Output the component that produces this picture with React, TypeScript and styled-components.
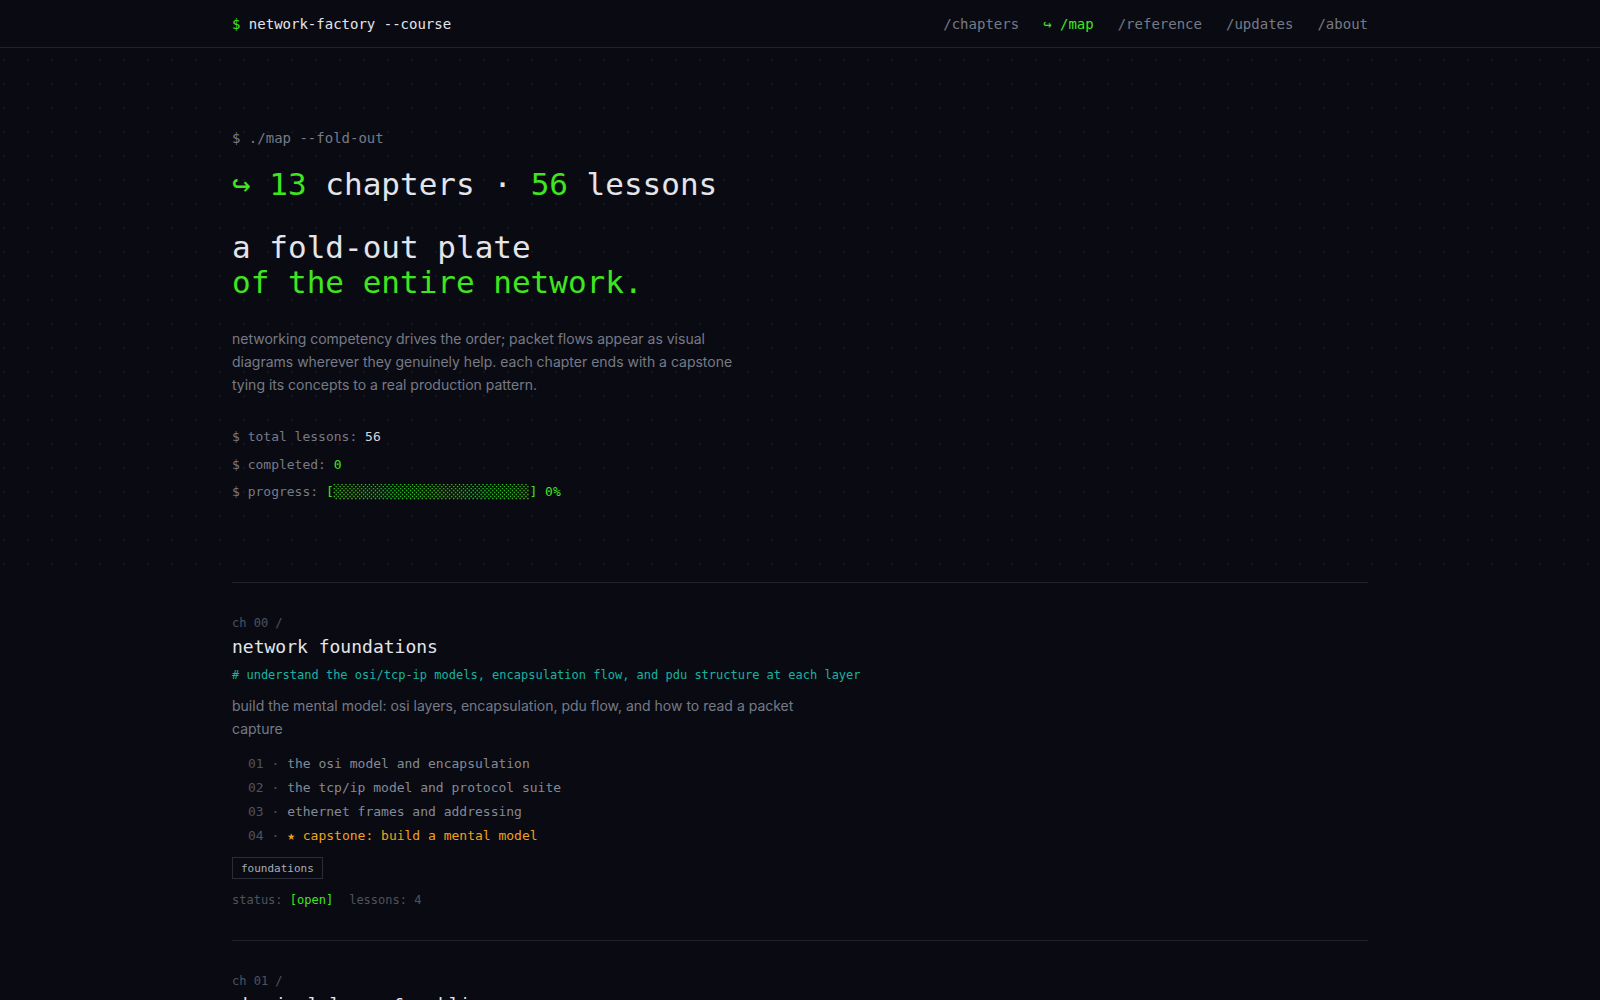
import React from "react";
import styled, { createGlobalStyle } from "styled-components";

const mono = `"DejaVu Sans Mono", "Liberation Mono", monospace`;
const sans = `Inter, "Noto Sans", "Liberation Sans", sans-serif`;

const green = "#3fe61f";
const teal = "#17b3a0";
const amber = "#eea21a";
const text = "#e4e5ea";
const muted = "#767a87";
const dim = "#4e5260";
const rule = "#20222c";

const Global = createGlobalStyle`
  html, body {
    margin: 0;
    padding: 0;
    background: #0a0b12;
    color: ${text};
    font-family: ${mono};
  }
  * { box-sizing: border-box; }
`;

const Container = styled.div`
  max-width: 1200px;
  margin: 0 auto;
  padding: 0 32px;
`;

const Header = styled.header`
  height: 48px;
  border-bottom: 1px solid ${rule};
`;

const HeaderRow = styled(Container)`
  height: 47px;
  display: flex;
  align-items: center;
  justify-content: space-between;
  font-size: 14px;
`;

const Brand = styled.div`
  color: ${text};
  white-space: pre;
  span { color: ${green}; }
`;

const Nav = styled.nav`
  display: flex;
  gap: 24px;
`;

const NavLink = styled.a<{ $active?: boolean }>`
  color: ${(p) => (p.$active ? green : muted)};
  text-decoration: none;
  white-space: pre;
`;

const Hero = styled.section`
  padding: 80px 0 80px;
  background-image: radial-gradient(circle, #14161e 1px, transparent 1.6px);
  background-size: 24px 24px;
  background-position: -8px 0;
`;

const Prompt = styled.div`
  font-size: 14px;
  line-height: 20px;
  color: ${muted};
`;

const Count = styled.h1`
  margin: 18px 0 0;
  font-size: 31px;
  line-height: 37px;
  font-weight: 400;
  color: ${text};
  white-space: pre;
`;

const Hi = styled.span`
  color: ${green};
`;

const Plate = styled.h2`
  margin: 27px 0 0;
  font-size: 31px;
  line-height: 35px;
  font-weight: 400;
  color: ${text};
`;

const Lede = styled.p`
  margin: 27px 0 0;
  max-width: 510px;
  font-family: ${sans};
  font-size: 14px;
  line-height: 23px;
  color: ${muted};
`;

const Stats = styled.div`
  margin-top: 31px;
  display: flex;
  flex-direction: column;
  gap: 7.5px;
  font-size: 13px;
  line-height: 20px;
  color: ${muted};
  white-space: pre;
`;

const Value = styled.span<{ $tone?: "green" | "white" }>`
  color: ${(p) => (p.$tone === "green" ? green : "#d4d6dc")};
`;

const Chapter = styled.article`
  border-top: 1px solid ${rule};
  padding: 31px 0 31px;
`;

const ChNo = styled.div`
  font-size: 12px;
  line-height: 18px;
  color: ${dim};
`;

const ChTitle = styled.h3`
  margin: 3px 0 0;
  font-size: 18px;
  line-height: 24px;
  font-weight: 400;
  color: ${text};
`;

const Goal = styled.div`
  margin-top: 7px;
  font-size: 12px;
  line-height: 18px;
  color: ${teal};
`;

const Desc = styled.p`
  margin: 10px 0 0;
  max-width: 580px;
  font-family: ${sans};
  font-size: 14px;
  line-height: 23px;
  color: ${muted};
`;

const Lessons = styled.ol`
  list-style: none;
  margin: 12px 0 0;
  padding: 0 0 0 16px;
  font-size: 13px;
  line-height: 24px;
`;

const Lesson = styled.li<{ $capstone?: boolean }>`
  white-space: pre;
  color: ${(p) => (p.$capstone ? amber : "#858996")};
  b { font-weight: 400; color: ${dim}; }
`;

const Tags = styled.div`
  margin-top: 9px;
  display: flex;
  gap: 8px;
`;

const Tag = styled.span`
  display: inline-flex;
  align-items: center;
  height: 22px;
  padding: 0 8px;
  border: 1px solid #2a2d38;
  font-size: 11px;
  color: #a9adb8;
`;

const Status = styled.div`
  margin-top: 12px;
  display: flex;
  gap: 16px;
  font-size: 12px;
  line-height: 18px;
  color: ${dim};
  white-space: pre;
`;

type ChapterData = {
  no: string;
  title: string;
  goal: string;
  desc: string;
  lessons: { n: string; t: string; capstone?: boolean }[];
  tags: string[];
};

const chapters: ChapterData[] = [
  {
    no: "00",
    title: "network foundations",
    goal: "# understand the osi/tcp-ip models, encapsulation flow, and pdu structure at each layer",
    desc: "build the mental model: osi layers, encapsulation, pdu flow, and how to read a packet capture",
    lessons: [
      { n: "01", t: "the osi model and encapsulation" },
      { n: "02", t: "the tcp/ip model and protocol suite" },
      { n: "03", t: "ethernet frames and addressing" },
      { n: "04", t: "★ capstone: build a mental model", capstone: true },
    ],
    tags: ["foundations"],
  },
  {
    no: "01",
    title: "physical layer & cabling",
    goal: "# understand signalling, media types, and how bits become frames on the wire",
    desc: "copper, fibre and wireless media; encoding, duplex and the limits of each medium",
    lessons: [
      { n: "01", t: "media and signalling" },
      { n: "02", t: "★ capstone: cable a small office", capstone: true },
    ],
    tags: ["physical"],
  },
];

const bar = "░".repeat(25);

export default function App() {
  return (
    <>
      <Global />
      <Header>
        <HeaderRow>
          <Brand>
            <span>$</span> network-factory --course
          </Brand>
          <Nav>
            <NavLink href="#">/chapters</NavLink>
            <NavLink href="#" $active>
              ↪ /map
            </NavLink>
            <NavLink href="#">/reference</NavLink>
            <NavLink href="#">/updates</NavLink>
            <NavLink href="#">/about</NavLink>
          </Nav>
        </HeaderRow>
      </Header>

      <Hero>
        <Container>
          <Prompt>$ ./map --fold-out</Prompt>
          <Count>
            <Hi>↪ 13</Hi> chapters · <Hi>56</Hi> lessons
          </Count>
          <Plate>
            a fold-out plate
            <br />
            <Hi>of the entire network.</Hi>
          </Plate>
          <Lede>
            networking competency drives the order; packet flows appear as
            visual diagrams wherever they genuinely help. each chapter ends
            with a capstone tying its concepts to a real production pattern.
          </Lede>
          <Stats>
            <div>
              $ total lessons: <Value>56</Value>
            </div>
            <div>
              $ completed: <Value $tone="green">0</Value>
            </div>
            <div>
              $ progress: <Value $tone="green">[{bar}] 0%</Value>
            </div>
          </Stats>
        </Container>
      </Hero>

      <Container>
        {chapters.map((c) => (
          <Chapter key={c.no}>
            <ChNo>ch {c.no} /</ChNo>
            <ChTitle>{c.title}</ChTitle>
            <Goal>{c.goal}</Goal>
            <Desc>{c.desc}</Desc>
            <Lessons>
              {c.lessons.map((l) => (
                <Lesson key={l.n} $capstone={l.capstone}>
                  <b>{l.n} · </b>
                  {l.t}
                </Lesson>
              ))}
            </Lessons>
            <Tags>
              {c.tags.map((t) => (
                <Tag key={t}>{t}</Tag>
              ))}
            </Tags>
            <Status>
              <span>
                status: <Value $tone="green">[open]</Value>
              </span>
              <span>lessons: {c.lessons.length}</span>
            </Status>
          </Chapter>
        ))}
      </Container>
    </>
  );
}
